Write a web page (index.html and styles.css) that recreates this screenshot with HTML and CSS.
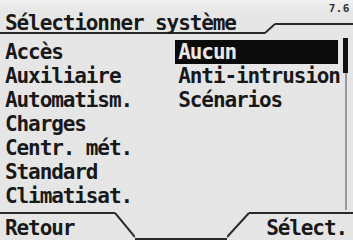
FILE: index.html
```html
<!DOCTYPE html>
<html lang="fr">
<head>
    <meta charset="UTF-8">
    <title>Sélectionner système</title>
    <link rel="stylesheet" href="styles.css">
</head>
<body>
    <div class="screen">
        <header class="top">
            <div class="title">Sélectionner système</div>
            <svg class="slant" width="10" height="34" viewBox="0 0 10 34">
                <path d="M0 33 L10 24" stroke="#2a2a2a" stroke-width="2" fill="none"/>
            </svg>
            <div class="version">7.6</div>
        </header>

        <main class="lists">
            <ul class="col col-left">
                <li>Accès</li>
                <li>Auxiliaire</li>
                <li>Automatism.</li>
                <li>Charges</li>
                <li>Centr. mét.</li>
                <li>Standard</li>
                <li>Climatisat.</li>
            </ul>
            <ul class="col col-right">
                <li class="selected">Aucun</li>
                <li>Anti-intrusion</li>
                <li>Scénarios</li>
            </ul>
            <div class="scrollbar">
                <div class="thumb"></div>
            </div>
        </main>

        <footer class="bottom">
            <div class="key key-left">Retour</div>
            <svg class="slant" width="20" height="28" viewBox="0 0 20 28">
                <path d="M0 1 L20 25" stroke="#2a2a2a" stroke-width="2" fill="none"/>
            </svg>
            <div class="gap"></div>
            <svg class="slant" width="22" height="28" viewBox="0 0 22 28">
                <path d="M0 25 L22 1" stroke="#2a2a2a" stroke-width="2" fill="none"/>
            </svg>
            <div class="key key-right">Sélect.</div>
        </footer>
    </div>
</body>
</html>
```

FILE: styles.css
```css
body {
    margin: 0;
    padding: 0;
    background-color: #e5e5e5;
}
.screen {
    width: 353px;
    height: 240px;
    overflow: hidden;
    background: linear-gradient(#f1f1f1 0px, #e6e6e6 12px, #e5e5e5 100%);
    color: #181818;
    font-family: "DejaVu Sans Mono", monospace;
    font-weight: bold;
    font-size: 21px;
    letter-spacing: -1.1px;
}
.top {
    display: flex;
    height: 34px;
}
.title {
    box-sizing: border-box;
    width: 265px;
    height: 34px;
    padding: 13px 0 0 5px;
    line-height: 21px;
    border-bottom: 2px solid #2a2a2a;
    white-space: nowrap;
}
.slant {
    display: block;
    flex: none;
}
.version {
    flex: 1;
    box-sizing: border-box;
    height: 25px;
    padding: 3px 3px 0 0;
    border-bottom: 2px solid #2a2a2a;
    text-align: right;
    font-size: 11px;
    line-height: 11px;
    letter-spacing: 0.5px;
    color: #333;
}
.lists {
    display: flex;
    height: 178px;
    box-sizing: border-box;
    padding-top: 6px;
}
.col {
    list-style: none;
    margin: 0;
    padding: 0;
}
.col li {
    height: 24px;
    line-height: 24px;
    white-space: nowrap;
}
.col-left {
    width: 175px;
    padding-left: 5px;
}
.col-right {
    width: 163px;
}
.col-right li {
    padding-left: 3px;
}
.col-right .selected {
    background-color: #0b0b0b;
    color: #e8e8e8;
}
.scrollbar {
    position: relative;
    width: 10px;
    margin-left: 5px;
}
.scrollbar::before {
    content: "";
    position: absolute;
    left: 2px;
    top: -2px;
    bottom: 2px;
    width: 2px;
    background-color: #9a9a9a;
}
.thumb {
    position: relative;
    width: 5px;
    height: 35px;
    margin-top: -2px;
    background-color: #111;
}
.bottom {
    display: flex;
    height: 28px;
}
.key {
    box-sizing: border-box;
    height: 28px;
    padding-top: 2px;
    line-height: 24px;
    border-top: 2px solid #2a2a2a;
    white-space: nowrap;
}
.key-left {
    width: 115px;
    padding-left: 5px;
}
.gap {
    width: 92px;
    height: 26px;
    border-bottom: 2px solid #2a2a2a;
}
.key-right {
    flex: 1;
    padding-right: 6px;
    text-align: right;
}
```
